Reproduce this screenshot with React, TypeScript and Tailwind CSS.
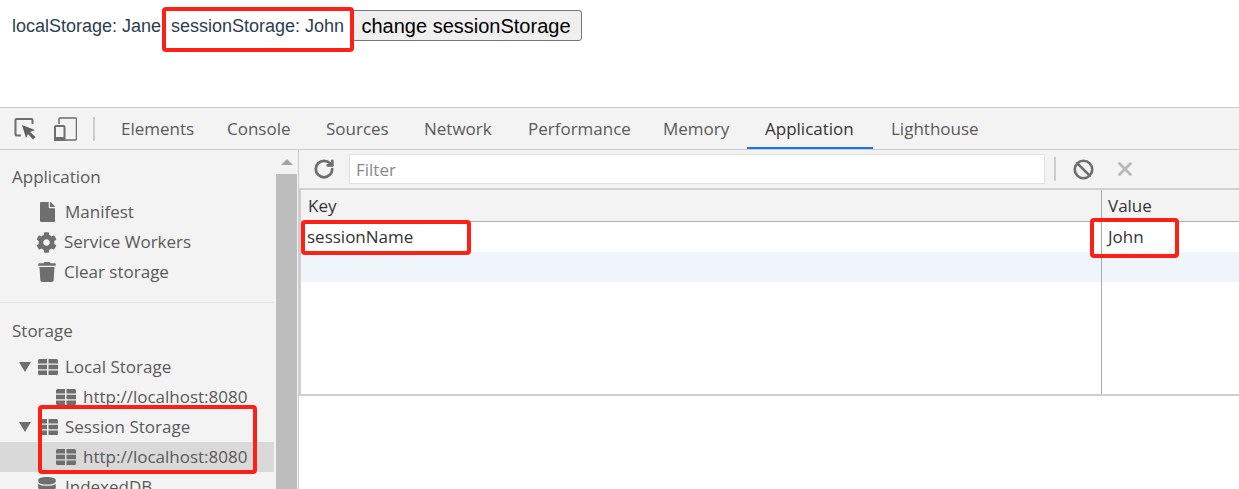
import { RotateCw, Ban, X } from "lucide-react";
import { FaCog, FaTrash, FaFile, FaDatabase } from "react-icons/fa";

const tabs = [
  { label: "Elements", width: "w-[106px]" },
  { label: "Console", width: "w-[99px]" },
  { label: "Sources", width: "w-[98px]" },
  { label: "Network", width: "w-[104px]" },
  { label: "Performance", width: "w-[135px]" },
  { label: "Memory", width: "w-[102px]" },
  { label: "Application", width: "w-[126px]" },
  { label: "Lighthouse", width: "w-[126px]" },
];

function TableIcon({ className = "" }: { className?: string }) {
  return (
    <svg width="20" height="16" viewBox="0 0 20 16" className={className}>
      <path
        fill="#6e6e6e"
        d="M1.500 0H9v4.500H0V1.500A1.500 1.500 0 0 1 1.500 0zM10.500 0h8A1.500 1.500 0 0 1 20 1.500v3h-9.500zM0 5.800h9v4.400H0zM10.500 5.800H20v4.400h-9.500zM0 11.500h9V16H1.500A1.500 1.500 0 0 1 0 14.500zM10.500 11.500H20v3a1.500 1.500 0 0 1-1.500 1.500h-8z"
      />
    </svg>
  );
}

function Arrow() {
  return <div className="w-0 h-0 border-l-[6.500px] border-r-[6.500px] border-t-[10px] border-l-transparent border-r-transparent border-t-[#6e6e6e]" />;
}

function SideRow({ icon, label, indent, selected }: { icon: React.ReactNode; label: string; indent: string; selected?: boolean }) {
  return (
    <div className={`h-[30px] flex items-center ${indent} ${selected ? "bg-[#d9d9d9]" : ""}`}>
      {icon}
      <span className="text-[#5a5a5a] whitespace-nowrap">{label}</span>
    </div>
  );
}

function Highlight({ className }: { className: string }) {
  return <div className={`absolute border-[4px] border-[#ff2015] rounded-[4px] ${className}`} />;
}

export default function App() {
  return (
    <div className="relative h-[489px] w-[1239px] overflow-hidden bg-white font-['Open_Sans',sans-serif] text-[17px]">
      {/* page */}
      <div className="h-[107px] pt-[10px] pl-[12px] flex items-start font-['Liberation_Sans',sans-serif] text-[18px] leading-[24px] text-[#2c3e50]">
        <span className="mt-[4px] w-[159px] whitespace-nowrap">localStorage: Jane</span>
        <span className="mt-[4px] w-[181px] whitespace-nowrap">sessionStorage: John</span>
        <button className="h-[31px] w-[230px] pr-[2px] bg-[#efefef] border border-[#767676] rounded-[3px] text-[20px] text-black whitespace-nowrap">
          change sessionStorage
        </button>
      </div>

      {/* devtools tabs */}
      <div className="h-[43px] bg-[#f3f3f3] border-y border-[#cccccc] flex items-stretch">
        <div className="w-[103px] flex items-center pl-[14px]">
          <svg width="22" height="22" viewBox="0 0 22 22">
            <path d="M7 17.500H2.500a1 1 0 0 1-1-1V2a1 1 0 0 1 1-1H17.500a1 1 0 0 1 1 1v4" fill="none" stroke="#6e6e6e" strokeWidth="2" />
            <path d="M8 7l13 5-5 2 5.500 5-2.500 2.500-5-5.500L12 20z" fill="#5f5f5f" />
          </svg>
          <svg width="23" height="24" viewBox="0 0 23 24" className="ml-[18px]">
            <path d="M5 7V2a1 1 0 0 1 1-1h15.500a1 1 0 0 1 1 1v20a1 1 0 0 1-1 1H11" fill="none" stroke="#6e6e6e" strokeWidth="1.500" />
            <rect x="1" y="9" width="9.500" height="14" rx="1" fill="none" stroke="#6e6e6e" strokeWidth="2" />
            <rect x="0" y="20" width="11" height="4" rx="1" fill="#6e6e6e" />
          </svg>
          <div className="w-[2px] h-[24px] bg-[#cccccc] ml-[16px]" />
        </div>
        {tabs.map((t) => (
          <div
            key={t.label}
            className={`${t.width} pl-[18px] pt-[2px] flex items-center whitespace-nowrap border-b-2 ${
              t.label === "Application" ? "border-[#1a73e8] text-[#333333]" : "border-transparent text-[#5a5a5a]"
            }`}
          >
            {t.label}
          </div>
        ))}
      </div>

      <div className="flex h-[339px]">
        {/* sidebar */}
        <div className="w-[274px] bg-[#f3f3f3] shrink-0">
          <div className="h-[47px] pl-[12px] pt-[12px] text-[#5a5a5a] leading-[30px]">Application</div>
          <SideRow indent="pl-[38px]" label="Manifest" icon={<FaFile size={20} color="#6e6e6e" className="mr-[8px] w-[19px]" />} />
          <SideRow indent="pl-[36px]" label="Service Workers" icon={<FaCog size={21} color="#6e6e6e" className="mr-[7px]" />} />
          <SideRow indent="pl-[37px]" label="Clear storage" icon={<FaTrash size={20} color="#6e6e6e" className="mr-[7px]" />} />
          <div className="mt-[15px] border-t border-[#e4e4e4] h-[50px] pl-[12px] pt-[13px] leading-[30px] text-[#5a5a5a]">Storage</div>
          <SideRow indent="pl-[19px]" label="Local Storage" icon={<><Arrow /><TableIcon className="ml-[7px] mr-[7px]" /></>} />
          <SideRow indent="pl-[56px]" label="http://localhost:8080" icon={<TableIcon className="mr-[7px]" />} />
          <SideRow indent="pl-[19px]" label="Session Storage" icon={<><Arrow /><TableIcon className="ml-[7px] mr-[7px]" /></>} />
          <SideRow indent="pl-[56px]" label="http://localhost:8080" selected icon={<TableIcon className="mr-[7px]" />} />
          <SideRow indent="pl-[37px]" label="IndexedDB" icon={<FaDatabase size={20} color="#6e6e6e" className="mr-[8px]" />} />
        </div>

        {/* scrollbar */}
        <div className="w-[25px] bg-[#f3f3f3] shrink-0 pl-[2px] border-r border-[#cccccc]">
          <div className="w-[21px] h-[24px] flex items-center justify-center">
            <div className="w-0 h-0 border-l-[6px] border-r-[6px] border-b-[6px] border-l-transparent border-r-transparent border-b-[#a3a3a3]" />
          </div>
          <div className="w-[21px] h-[315px] bg-[#bdbdbd]" />
        </div>

        {/* storage table */}
        <div className="flex-1 min-w-0">
          <div className="h-[40px] bg-[#f3f3f3] border-b-2 border-[#d0d0d0] flex items-center">
            <RotateCw size={22} strokeWidth={3} color="#6e6e6e" className="ml-[14px] mr-[14px]" />
            <div className="w-[696px] h-[30px] bg-white border border-[#e0e0e0] pl-[6px] leading-[30px] text-[#8a8a8a]">Filter</div>
            <div className="w-[2px] h-[24px] bg-[#cccccc] ml-[9px] mr-[17px]" />
            <Ban size={21} strokeWidth={3} color="#6e6e6e" />
            <X size={22} strokeWidth={3} color="#b8b8b8" className="ml-[20px]" />
          </div>
          <div className="h-[206px] border-l-2 border-b-2 border-[#cfcfcf] flex">
            <div className="w-[801px] border-r border-[#a8a8a8]">
              <div className="h-[32px] bg-[#f3f3f3] border-b border-[#b0b0b0] pl-[7px] leading-[31px] text-[#333333]">Key</div>
              <div className="h-[30px] pl-[6px] leading-[30px] text-[#333333]">sessionName</div>
              <div className="h-[30px] bg-[#f0f5fc]" />
            </div>
            <div className="flex-1">
              <div className="h-[32px] bg-[#f3f3f3] border-b border-[#b0b0b0] pl-[6px] leading-[31px] text-[#333333]">Value</div>
              <div className="h-[30px] pl-[6px] leading-[30px] text-[#333333]">John</div>
              <div className="h-[30px] bg-[#f0f5fc]" />
            </div>
          </div>
        </div>
      </div>

      {/* red annotations drawn over the screenshot */}
      <Highlight className="left-[162px] top-[7px] w-[192px] h-[45px]" />
      <Highlight className="left-[301px] top-[220px] w-[170px] h-[35px]" />
      <Highlight className="left-[1090px] top-[218px] w-[89px] h-[40px]" />
      <Highlight className="left-[38px] top-[405px] w-[219px] h-[69px]" />
    </div>
  );
}
